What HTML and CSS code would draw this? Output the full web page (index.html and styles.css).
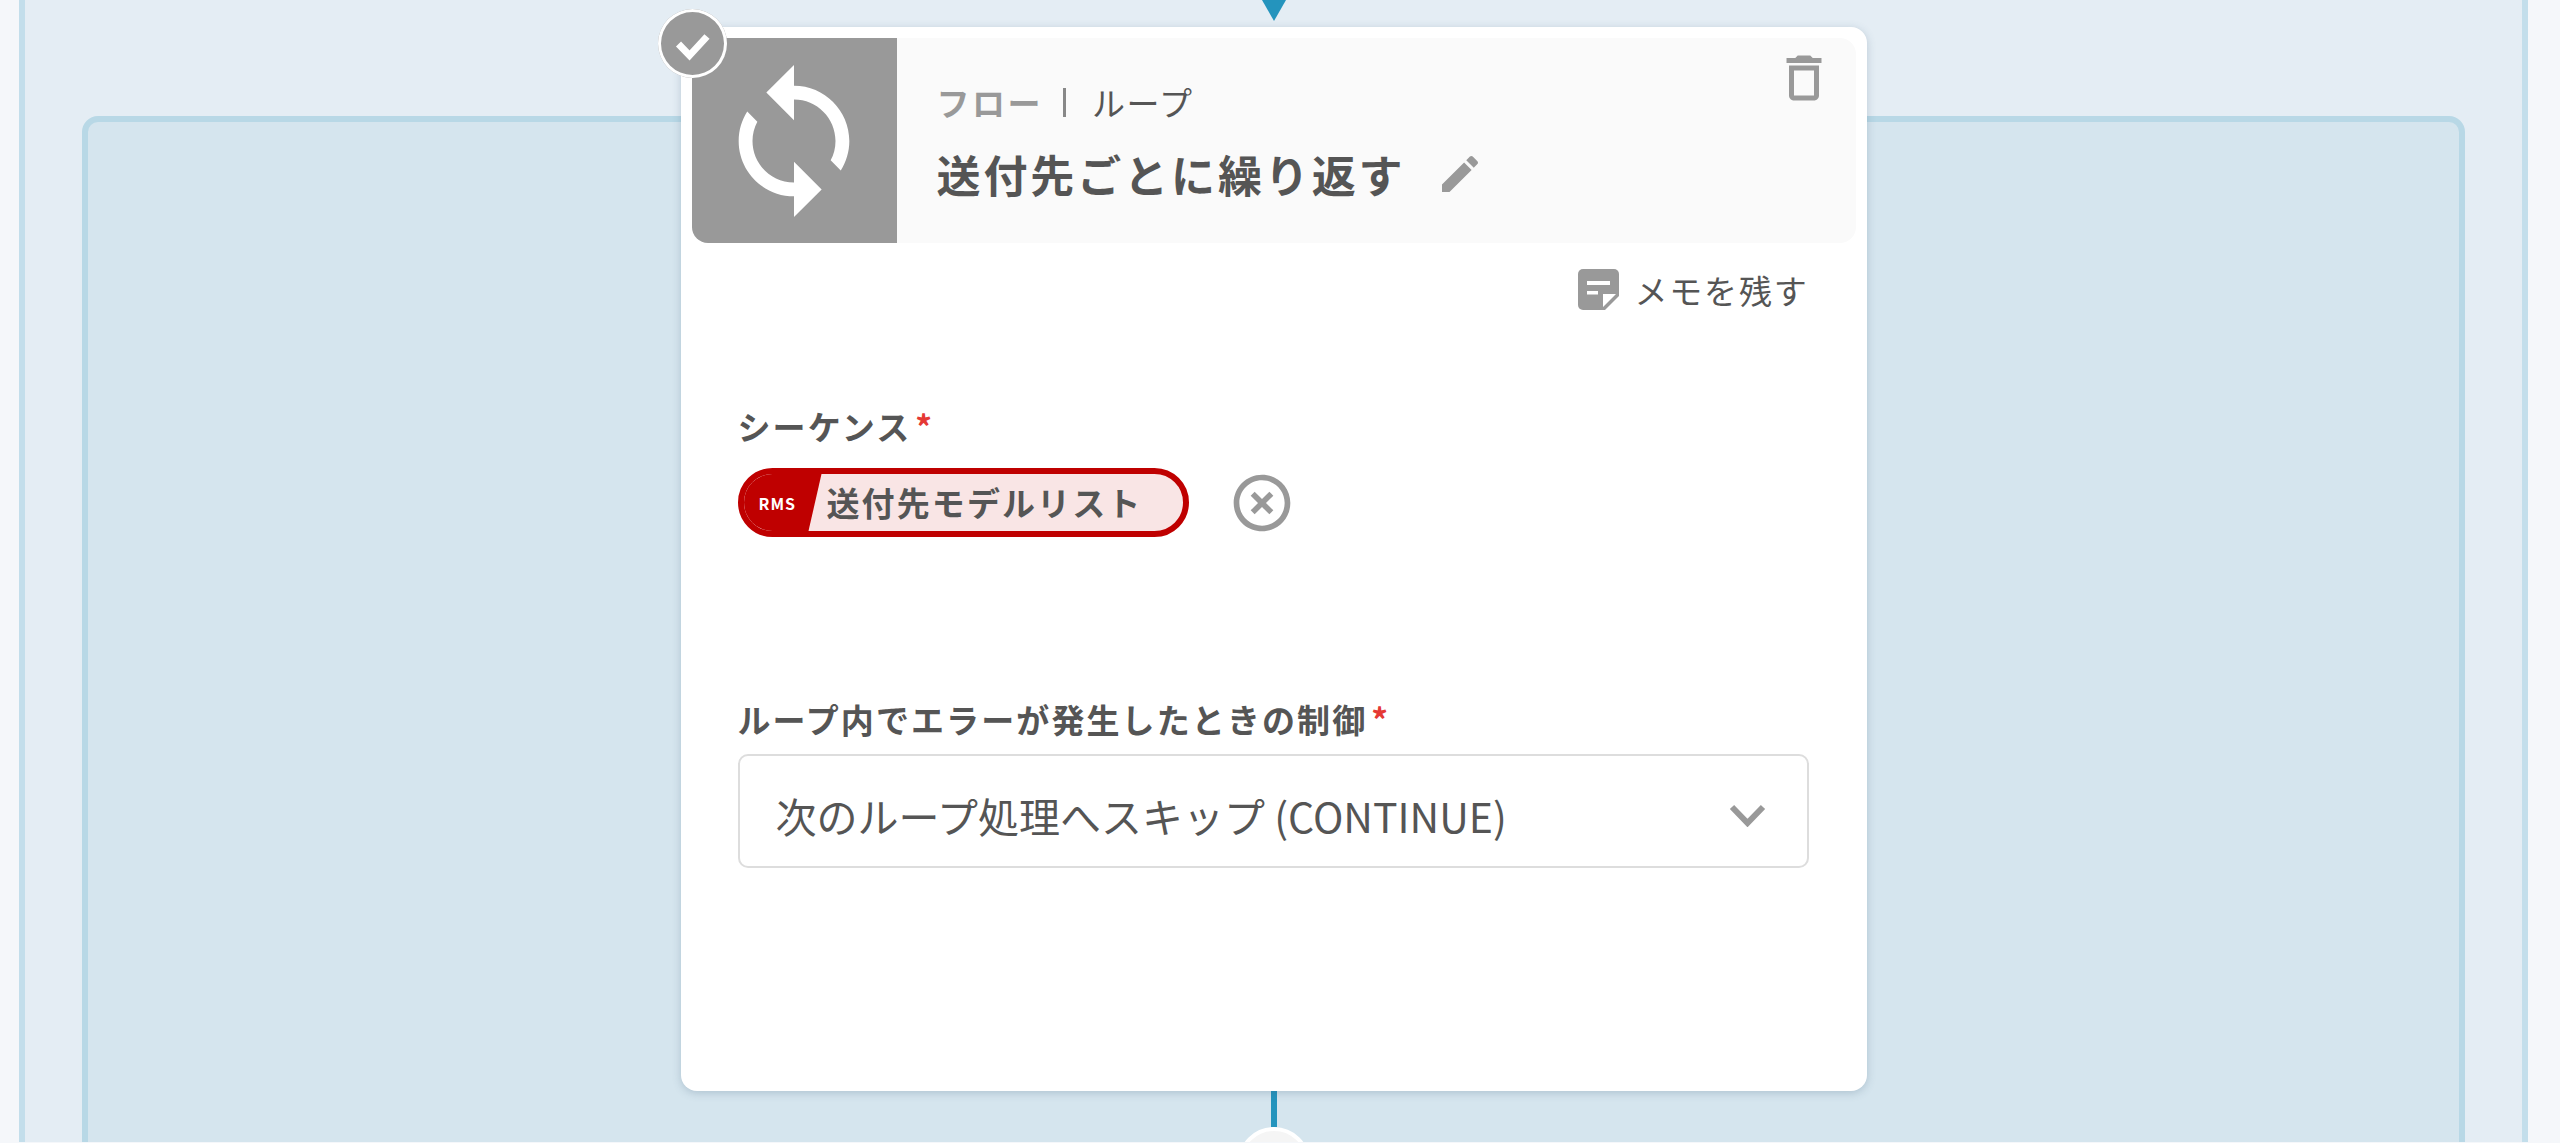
FILE: index.html
```html
<!DOCTYPE html>
<html lang="ja">
<head>
    <meta charset="UTF-8">
    <meta name="viewport" content="width=device-width, initial-scale=1.0">
    <title>ループ</title>
    <link rel="stylesheet" href="styles.css">
</head>
<body>
    <div class="canvas">
        <div class="flow-arrow"></div>
        <div class="loop-box">
            <div class="node">
                <div class="node-check">
                    <svg viewBox="0 0 69 69" width="69" height="69"><path d="M20.500 35l11 11.500 17.500-19" fill="none" stroke="#fff" stroke-width="7"/></svg>
                </div>
                <div class="node-head">
                    <div class="node-icon">
                        <svg viewBox="0 0 24 24" width="166" height="166"><path fill="#fff" d="M12 4V1L8 5l4 4V6c3.31 0 6 2.69 6 6 0 1.01-.25 1.97-.7 2.8l1.46 1.46C19.54 15.03 20 13.57 20 12c0-4.42-3.58-8-8-8zm0 14c-3.31 0-6-2.69-6-6 0-1.01.25-1.97.7-2.8L5.24 7.74C4.46 8.97 4 10.43 4 12c0 4.42 3.58 8 8 8v3l4-4-4-4v3z"/></svg>
                    </div>
                    <div class="node-info">
                        <div class="crumb">
                            <span class="crumb-type">フロー</span>
                            <span class="crumb-sep"></span>
                            <span class="crumb-name">ループ</span>
                        </div>
                        <div class="title-row">
                            <span class="title">送付先ごとに繰り返す</span>
                            <svg class="edit-icon" viewBox="0 0 24 24" width="48" height="48"><path fill="#999" d="M3 17.25V21h3.75L17.81 9.94l-3.75-3.75L3 17.25zM20.71 7.04c.39-.39.39-1.02 0-1.41l-2.34-2.34c-.39-.39-1.02-.39-1.41 0l-1.83 1.83 3.75 3.75 1.83-1.83z"/></svg>
                        </div>
                    </div>
                    <svg class="trash-icon" viewBox="0 0 24 24" width="60" height="60"><path fill="#999" d="M6 19c0 1.1.9 2 2 2h8c1.1 0 2-.9 2-2V7H6v12zM8 9h8v10H8V9zm7.5-5l-1-1h-5l-1 1H5v2h14V4z"/></svg>
                </div>
                <div class="memo-row">
                    <svg viewBox="0 0 41 41" width="41" height="41"><path fill="#999" d="M5 0h31a5 5 0 0 1 5 5v22L27 41H5a5 5 0 0 1-5-5V5a5 5 0 0 1 5-5z"/><path fill="#fff" d="M9 12h23v4H9zM9 22h11v3.500H9zM25 38V25h13z"/></svg>
                    <span class="memo-text">メモを残す</span>
                </div>
                <div class="field field-seq">
                    <div class="field-label">シーケンス<span class="req">*</span></div>
                    <div class="seq-row">
                        <div class="chip">
                            <span class="chip-tag">RMS</span>
                            <span class="chip-text">送付先モデルリスト</span>
                        </div>
                        <svg class="clear-icon" viewBox="0 0 24 24" width="68" height="68"><path fill="#999" d="M14.59 8L12 10.59 9.41 8 8 9.41 10.59 12 8 14.59 9.41 16 12 13.41 14.59 16 16 14.59 13.41 12 16 9.41 14.59 8zM12 2C6.47 2 2 6.47 2 12s4.47 10 10 10 10-4.47 10-10S17.53 2 12 2zm0 18c-4.41 0-8-3.59-8-8s3.59-8 8-8 8 3.59 8 8-3.59 8-8 8z"/></svg>
                    </div>
                </div>
                <div class="field field-error">
                    <div class="field-label">ループ内でエラーが発生したときの制御<span class="req">*</span></div>
                    <div class="select-box">
                        <span class="select-text">次のループ処理へスキップ (CONTINUE)</span>
                        <svg class="select-arrow" viewBox="0 0 37 23" width="37" height="23"><path d="M3 3l15.500 16L34 3" fill="none" stroke="#999" stroke-width="6"/></svg>
                    </div>
                </div>
            </div>
            <div class="flow-line"></div>
            <div class="add-button"></div>
        </div>
    </div>
</body>
</html>
```

FILE: styles.css
```css
html, body {
    margin: 0;
    height: 100%;
    overflow: hidden;
    background: #f5f7fa;
    font-family: "Noto Sans CJK JP", "Noto Sans", sans-serif;
    color: #555;
}
.canvas {
    box-sizing: border-box;
    height: 1142px;
    margin: 0 32px 0 19px;
    background: #e4edf4;
    border-left: 6px solid #c3deeb;
    border-right: 6px solid #c3deeb;
    padding: 0 57px;
    overflow: hidden;
}
.flow-arrow {
    width: 0;
    height: 0;
    margin: 0 auto;
    border-left: 12px solid transparent;
    border-right: 12px solid transparent;
    border-top: 21px solid #2494bd;
}
.loop-box {
    box-sizing: border-box;
    height: 1200px;
    margin-top: 95px;
    background: #d5e5ee;
    border: 6px solid #b8d8e6;
    border-radius: 16px;
    display: flex;
    flex-direction: column;
    align-items: center;
}
.node {
    box-sizing: border-box;
    position: relative;
    flex: none;
    width: 1186px;
    height: 1064px;
    margin-top: -95px;
    padding: 11px;
    background: #fff;
    border-radius: 16px;
    box-shadow: 0 2px 8px rgba(60, 90, 120, 0.25);
}
.node-check {
    position: absolute;
    left: -23px;
    top: -18px;
    width: 69px;
    height: 69px;
    border-radius: 50%;
    background: #999;
    box-shadow: inset 0 0 0 3px #fff;
}
.node-check svg {
    display: block;
}
.node-head {
    display: flex;
    height: 205px;
    background: #fafafa;
    border-radius: 0 16px 16px 16px;
}
.node-icon {
    flex: none;
    width: 205px;
    display: flex;
    align-items: center;
    justify-content: center;
    background: #999;
    border-radius: 0 0 0 16px;
}
.node-info {
    flex: 1;
    padding: 42px 0 0 40px;
}
.crumb {
    display: flex;
    align-items: center;
    height: 44px;
    font-size: 33px;
    letter-spacing: 1.5px;
}
.crumb-type {
    color: #999;
    font-weight: 700;
    letter-spacing: 2.5px;
}
.crumb-sep {
    width: 3px;
    height: 29px;
    margin: 0 26px 0 20px;
    background: #888;
}
.title-row {
    display: flex;
    align-items: center;
    height: 60px;
    margin-top: 20px;
}
.title {
    font-size: 44px;
    font-weight: 700;
    letter-spacing: 2.9px;
}
.edit-icon {
    margin-left: 30px;
}
.trash-icon {
    margin: 10px 22px 0 0;
}
.memo-row {
    display: flex;
    align-items: center;
    justify-content: flex-end;
    height: 41px;
    margin: 26px 47px 0 0;
}
.memo-text {
    margin-left: 16px;
    font-size: 33px;
    letter-spacing: 1.8px;
}
.field {
    margin-left: 46px;
}
.field-seq {
    margin-top: 94px;
}
.field-error {
    margin-top: 160px;
}
.field-label {
    font-size: 33px;
    line-height: 44px;
    font-weight: 700;
    letter-spacing: 2.1px;
}
.req {
    margin-left: 4px;
    color: #e53935;
}
.seq-row {
    display: flex;
    align-items: center;
    margin-top: 20px;
}
.chip {
    box-sizing: border-box;
    display: flex;
    align-items: stretch;
    width: 451px;
    height: 69px;
    border: 6px solid #bf0000;
    border-radius: 35px;
    overflow: hidden;
    background: #f9e5e5;
}
.chip-tag {
    box-sizing: border-box;
    flex: none;
    display: flex;
    align-items: center;
    width: 78px;
    padding-left: 15px;
    background: #bf0000;
    clip-path: polygon(0 0, 100% 0, 65px 100%, 0 100%);
    color: #fff;
    font-size: 16px;
    font-weight: 700;
    letter-spacing: 1px;
}
.chip-text {
    margin-left: 5px;
    font-size: 33px;
    line-height: 57px;
    font-weight: 700;
    letter-spacing: 2.1px;
    white-space: nowrap;
}
.clear-icon {
    margin-left: 39px;
}
.select-box {
    box-sizing: border-box;
    display: flex;
    align-items: center;
    justify-content: space-between;
    width: 1071px;
    height: 114px;
    margin-top: 13px;
    padding: 0 41px 0 36px;
    border: 2px solid #ddd;
    border-radius: 10px;
}
.select-text {
    margin-top: 8px;
    font-size: 41px;
}
.select-arrow {
    margin-top: 8px;
}
.flow-line {
    flex: none;
    width: 6px;
    height: 36px;
    background: #2494bd;
}
.add-button {
    flex: none;
    box-sizing: border-box;
    width: 72px;
    height: 72px;
    border: 4px solid #fff;
    border-radius: 50%;
    background: #f5f5f5;
}
```
